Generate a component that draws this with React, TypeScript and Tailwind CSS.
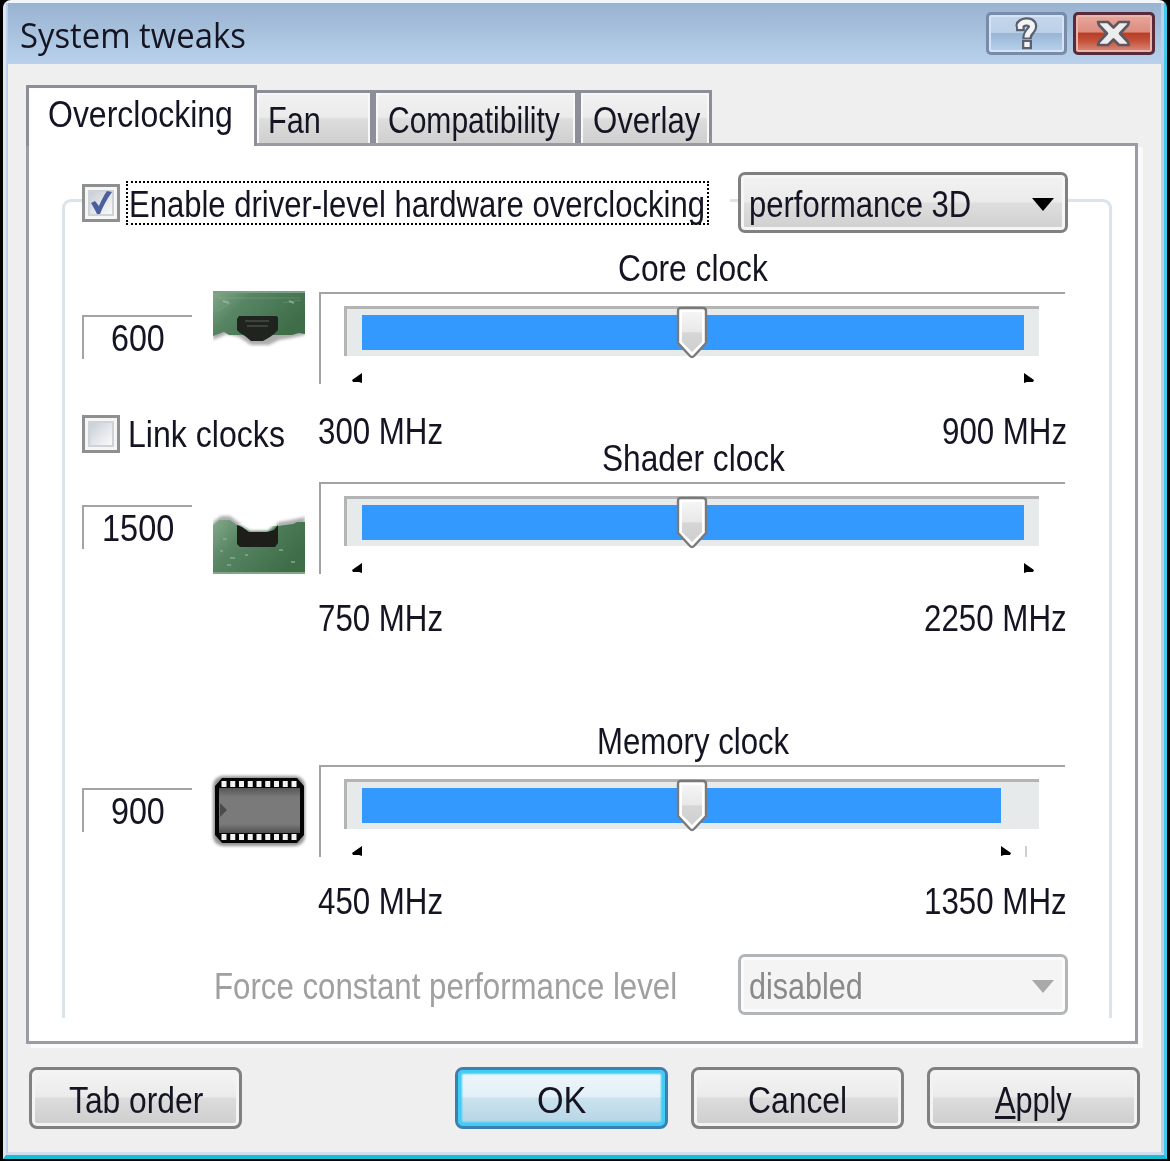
import { useLayoutEffect, useRef, useState } from 'react';
import type { ReactNode } from 'react';
import { clsx } from 'clsx';

interface FitTextProps {
  className: string;
  children: ReactNode;
}

// Squeezes one line of text into the width given by its class
function FitText({ className, children }: FitTextProps) {
  const outer = useRef<HTMLSpanElement>(null);
  const inner = useRef<HTMLSpanElement>(null);
  const [scale, setScale] = useState(1);

  useLayoutEffect(() => {
    if (outer.current && inner.current) {
      setScale(outer.current.clientWidth / inner.current.offsetWidth);
    }
  }, []);

  return (
    <span ref={outer} className={clsx('block h-[30px] shrink-0 leading-[33px]', className)}>
      <span
        ref={inner}
        className="inline-block origin-left whitespace-nowrap"
        style={{ transform: `scaleX(${scale})` }}
      >
        {children}
      </span>
    </span>
  );
}

function CheckBox({ checked }: { checked?: boolean }) {
  return (
    <span className="block size-[38px] shrink-0 border-[3px] border-[#8e8f8f] bg-[#f6f6f6] p-[3px]">
      <span className="block size-[26px] border-2 border-[#cfd3d8] bg-linear-to-br from-[#c9cfd8] to-[#fafafa]">
        {checked && (
          <svg viewBox="0 0 22 22" className="size-[22px] overflow-visible">
            <path d="M1 11 L5 9 L9 14 C11 9 14 3 17 -1 L22 0 C17 7 13 14 10 22 L7 22 C5 18 3 14 1 11Z" fill="#4a5f9c" />
          </svg>
        )}
      </span>
    </span>
  );
}

interface ComboProps {
  label: string;
  labelClass: string;
  disabled?: boolean;
}

function Combo({ label, labelClass, disabled }: ComboProps) {
  return (
    <div
      className={clsx(
        'flex h-[61px] w-[330px] shrink-0 items-start rounded-[7px] border-[3px] pt-[13px] pl-[8px]',
        disabled
          ? 'border-[#b2b6b8] bg-[#f4f4f4] text-[#8a8a8a] shadow-[inset_0_0_0_3px_#fbfbfb]'
          : 'border-[#808080] bg-[linear-gradient(#f2f2f2,#ebebeb_48%,#dedede_52%,#cfcfcf)] shadow-[inset_0_0_0_3px_#f6f6f6]'
      )}
    >
      <FitText className={labelClass}>{label}</FitText>
      <svg viewBox="0 0 22 13" className="mt-[10px] mr-[11px] ml-auto h-[13px] w-[22px]">
        <path d="M0 0H22L11 13Z" fill={disabled ? '#a9a9a9' : '#000'} />
      </svg>
    </div>
  );
}

function CoreIcon() {
  return (
    <svg viewBox="0 0 92 56" className="h-[56px] w-[92px]">
      <defs>
        <linearGradient id="pcb" x1="0" y1="0" x2="1" y2="0.5">
          <stop offset="0" stopColor="#84a98a" />
          <stop offset="0.35" stopColor="#588665" />
          <stop offset="1" stopColor="#3e6d48" />
        </linearGradient>
        <filter id="soft" x="-10%" y="-20%" width="120%" height="150%">
          <feGaussianBlur stdDeviation="1.8" />
        </filter>
      </defs>
      <path d="M0 40H92V44L78 47L66 49L56 54H38L26 46L14 43L0 49Z" fill="#777" opacity="0.6" filter="url(#soft)" />
      <path d="M0 1H92V43L86 42L79 44H16L11 41L0 45Z" fill="url(#pcb)" />
      <path d="M5 7H87M4 20L18 12M70 12L88 9" stroke="#9cbda2" strokeWidth="1" opacity="0.25" />
      <path d="M76 10L81 12M10 10L16 12" stroke="#b4d0b8" strokeWidth="2" opacity="0.5" />
      <path d="M26 25H64L65 27V39L61 43L57 46L50 50H38L32 45L27 42L24 39V28Z" fill="#20241f" />
      <path d="M32 30H56M34 35H55" stroke="#4b504b" strokeWidth="2" opacity="0.7" />
      <path d="M0 1H92" stroke="#7ba084" strokeWidth="2" />
    </svg>
  );
}

function ShaderIcon() {
  return (
    <svg viewBox="0 0 92 62" className="h-[62px] w-[92px]">
      <path d="M0 9L8 3H17L25 9L36 14H60L66 9L78 7L92 4V14H0Z" fill="#777" opacity="0.6" filter="url(#soft)" />
      <path d="M0 12L6 7H17L24 12L64 13L80 11L84 9H92V61H0Z" fill="url(#pcb)" />
      <path d="M27 12L37 18H55L62 12V9H27Z" fill="#fff" filter="url(#soft)" />
      <path d="M24 12L29 14L36 19H54L61 17L65 12V30L62 34H27L24 31Z" fill="#1d1e1a" />
      <path d="M10 26H14M7 38H10M17 45H22M66 37H70M78 49H82M14 52H18M32 42H35" stroke="#86b08b" strokeWidth="2" opacity="0.7" />
      <path d="M0 60H92" stroke="#80a886" strokeWidth="2" />
    </svg>
  );
}

function MemoryIcon() {
  const pins = [0, 1, 2, 3, 4, 5, 6, 7, 8];

  return (
    <svg viewBox="0 0 92 72" className="h-[72px] w-[92px] overflow-visible">
      <defs>
        <linearGradient id="chip" x1="0" y1="0" x2="0" y2="1">
          <stop offset="0" stopColor="#555" />
          <stop offset="0.2" stopColor="#7a7a7a" />
          <stop offset="0.8" stopColor="#7a7a7a" />
          <stop offset="1" stopColor="#505050" />
        </linearGradient>
      </defs>
      <rect x="0" y="1" width="92" height="70" rx="10" fill="#777" opacity="0.8" filter="url(#soft)" />
      <path d="M9 3H84L91 11V60L84 68H9L2 60V11Z" fill="#050505" />
      <rect x="6" y="13" width="81" height="45" fill="url(#chip)" />
      <path d="M7 28L14 35L7 42Z" fill="#4b4b4b" />
      {pins.map((pin) => (
        <g key={pin} fill="#f3f3f3">
          <rect x={8.5 + pin * 8.75} y="6" width="5" height="6" />
          <rect x={8.5 + pin * 8.75} y="59" width="5" height="6" />
        </g>
      ))}
    </svg>
  );
}

interface ClockProps {
  title: string;
  titleClass: string;
  value: string;
  valueClass: string;
  min: string;
  minClass: string;
  max: string;
  maxClass: string;
  icon: ReactNode;
  iconClass: string;
  className: string;
  rangeClass: string;
  limited?: boolean;
  children?: ReactNode;
}

function Clock(props: ClockProps) {
  return (
    <section className={clsx('flex shrink-0', props.className)}>
      <div className="w-[237px] shrink-0">
        <div className="flex h-[163px]">
          <div className="mt-[63px] flex h-[44px] w-[110px] justify-center border-t-[2px] border-l-[2px] border-[#a3a3a3] pt-[5px]">
            <FitText className={props.valueClass}>{props.value}</FitText>
          </div>
          <div className={clsx('ml-[21px]', props.iconClass)}>{props.icon}</div>
        </div>
        {props.children}
      </div>

      <div className="w-[748px] shrink-0">
        <div className="flex h-[40px] justify-center">
          <FitText className={props.titleClass}>{props.title}</FitText>
        </div>
        <div className="h-[92px] w-[746px] border-t-[2px] border-l-[2px] border-[#a3a3a3] pt-[12px] pl-[23px]">
          <div className="relative h-[50px] w-[695px] border-t-[3px] border-l-[3px] border-[#b4b4b4] bg-[#e7eaea] pt-[6px] pl-[15px]">
            <div className={clsx('h-[35px] bg-[#3399ff]', props.limited ? 'w-[639px]' : 'w-[662px]')} />
            <svg viewBox="0 0 32 54" className="absolute -top-[3px] left-[329px] h-[54px] w-[32px]">
              <defs>
                <linearGradient id="thumb" x1="0" y1="0" x2="0" y2="1">
                  <stop offset="0" stopColor="#f5f5f5" />
                  <stop offset="0.5" stopColor="#e8e8e8" />
                  <stop offset="0.52" stopColor="#d6d6d6" />
                  <stop offset="1" stopColor="#cfcfcf" />
                </linearGradient>
              </defs>
              <path
                d="M5 2H27Q30 2 30 5V37L18 50Q16 52 14 50L2 37V5Q2 2 5 2Z"
                fill="#fff"
                stroke="#7a7a7a"
                strokeWidth="2.4"
                strokeLinejoin="round"
              />
              <path d="M6 6H26V36L16 46L6 36Z" fill="url(#thumb)" />
            </svg>
          </div>
          <div className="mt-[17px] ml-[8px] flex h-[12px] items-start">
            <svg viewBox="0 0 10 10" className="size-[10px]">
              <path d="M10 0V10L7 9H1L0 7Z" />
            </svg>
            <svg
              viewBox="0 0 10 10"
              className={clsx('size-[10px]', props.limited ? 'ml-[639px]' : 'ml-[662px]')}
            >
              <path d="M0 0V10L3 9H9L10 7Z" />
            </svg>
            {props.limited && <span className="ml-[14px] h-[11px] w-[2px] bg-[#cfcfcf]" />}
          </div>
        </div>
        <div className={clsx('flex justify-between', props.rangeClass)}>
          <FitText className={props.minClass}>{props.min}</FitText>
          <FitText className={props.maxClass}>{props.max}</FitText>
        </div>
      </div>
    </section>
  );
}

interface TabProps {
  label: string;
  className: string;
  labelClass: string;
}

function Tab({ label, className, labelClass }: TabProps) {
  return (
    <div
      className={clsx(
        'mt-[5px] h-[53px] shrink-0 border-[3px] border-b-0 border-[#8c8f98] pt-[11px]',
        'bg-[linear-gradient(#f2f2f2,#ebebeb_48%,#dddddd_52%,#cfcfcf)] shadow-[inset_0_2px_0_#f8f8f8,inset_2px_0_0_#f8f8f8,inset_-2px_0_0_#f8f8f8]',
        className
      )}
    >
      <FitText className={labelClass}>{label}</FitText>
    </div>
  );
}

interface PushButtonProps {
  children: ReactNode;
  labelClass: string;
  primary?: boolean;
}

function PushButton({ children, labelClass, primary }: PushButtonProps) {
  return (
    <button
      className={clsx(
        'flex h-[62px] w-[213px] shrink-0 justify-center rounded-[8px] border-[3px] pt-[14px]',
        primary
          ? 'border-[#3c7fb1] bg-[linear-gradient(#eef6fb,#e4f0f7_47%,#cbe2ee_51%,#b3d4e6)] shadow-[inset_0_0_2px_4px_#3fcdf5]'
          : 'border-[#808080] bg-[linear-gradient(#f4f4f4,#ebebeb_47%,#dcdcdc_51%,#cdcdcd)] shadow-[inset_0_0_0_3px_#f3f3f3]'
      )}
    >
      <FitText className={labelClass}>{children}</FitText>
    </button>
  );
}

function TitleBar() {
  return (
    <header className="flex h-[61px] items-start bg-linear-to-b from-[#98b3d0] to-[#b9d1ec] pr-[6px] pl-[12px]">
      <FitText className="mt-[15px] w-[226px] font-['Open_Sans',sans-serif] text-[35px]">System tweaks</FitText>
      <div className="mt-[9px] ml-auto flex gap-[6px]">
        <button className="h-[43px] w-[81px] rounded-[5px] border-[3px] border-[#788ba8] bg-[linear-gradient(#c3d6eb,#bcd0e8_48%,#9ab6d6_50%,#b8d3ee)] shadow-[inset_0_0_0_2px_#d5e4f4]">
          <svg viewBox="0 0 75 37" className="h-[37px] w-[75px]">
            <g fill="none" stroke="#596171" strokeWidth="9.5">
              <path d="M27 11.5H31C31 6 43 5 43.5 11C44 16 38 16 38 24" />
              <path d="M33 29.5H43" />
            </g>
            <g fill="none" stroke="#f4f4f4" strokeWidth="5">
              <path d="M29 11.5H31C31 6 43 5 43.5 11C44 16 38 16 38 22.5" />
              <path d="M35.3 29.5H40.7" />
            </g>
          </svg>
        </button>
        <button className="h-[43px] w-[82px] rounded-[5px] border-[3px] border-[#592b3a] bg-[linear-gradient(#e8a79c,#dc8d80_46%,#b93d25_49%,#c4523b_70%,#dc8f7e)] shadow-[inset_0_0_0_2px_#eab5ab]">
          <svg viewBox="0 0 76 37" className="h-[37px] w-[76px]">
            <path
              d="M22 7H32L37.5 12.5L43 7H53L52 10L44 18.5L52 27L53 30H43L37.5 24.5L32 30H22L23 27L31 18.5L23 10Z"
              fill="#ededed"
              stroke="#5c5763"
              strokeWidth="2.6"
              strokeLinejoin="round"
            />
          </svg>
        </button>
      </div>
    </header>
  );
}

export default function App() {
  return (
    <div className="h-[1161px] w-[1170px] overflow-hidden bg-black pr-[3px] pb-[2px] pl-[3px] font-['Liberation_Sans',Arial,sans-serif] text-[37px] text-[#141422]">
      <div className="h-[1159px] rounded-t-[8px] border-t-[3px] border-r-[3px] border-b-[4px] border-l-[3px] border-t-[#f1f6fa] border-r-[#3fc9ea] border-b-[#14bfd6] border-l-[#e0e5e8]">
        <div className="h-[1152px] border-r-[3px] border-b-[3px] border-l-[2px] border-r-[#b9cfeb] border-b-[#d2dcef] border-l-[#b9d1ec] bg-[#efefef]">
          <TitleBar />

          <main className="pt-[21px] pl-[18px]">
            <nav className="flex h-[58px] items-start">
              <div className="relative z-10 h-[61px] w-[231px] shrink-0 border-[3px] border-b-0 border-[#8c8f98] bg-white pt-[10px] pl-[19px]">
                <FitText className="w-[185px]">Overclocking</FitText>
              </div>
              <Tab label="Fan" className="-ml-[3px] w-[119px] pl-[11px]" labelClass="w-[53px]" />
              <Tab label="Compatibility" className="w-[205px] pl-[12px]" labelClass="w-[172px]" />
              <Tab label="Overlay" className="w-[134px] pl-[12px]" labelClass="w-[107px]" />
            </nav>

            <div className="h-[901px] w-[1112px] border-[3px] border-[#9a9ca5] bg-white pt-[53px] pl-[33px] shadow-[5px_4px_0_#fafafa]">
              <div className="h-[819px] w-[1050px] rounded-t-[9px] border-[3px] border-b-0 border-[#dae4ea]">
                <div className="-mt-[30px] flex h-[61px] items-start pl-[17px]">
                  <div className="mt-[9px] flex w-[648px] items-start bg-white">
                    <div className="mt-[3px]">
                      <CheckBox checked />
                    </div>
                    <div className="ml-[6px] h-[44px] w-[583px] border-[2px] border-dotted border-black pt-[5px] pl-[1px]">
                      <FitText className="w-[576px]">Enable driver-level hardware overclocking</FitText>
                    </div>
                  </div>
                  <div className="ml-[8px]">
                    <Combo label="performance 3D" labelClass="w-[222px]" />
                  </div>
                </div>

                <div className="pt-[19px] pl-[17px]">
                  <Clock
                    title="Core clock"
                    titleClass="w-[150px]"
                    value="600"
                    valueClass="w-[54px]"
                    min="300 MHz"
                    minClass="w-[125px] -ml-[1px]"
                    max="900 MHz"
                    maxClass="w-[125px]"
                    icon={<CoreIcon />}
                    iconClass="mt-[39px]"
                    className="h-[190px]"
                    rangeClass="mt-[31px]"
                  >
                    <div className="flex items-start">
                      <CheckBox />
                      <FitText className="mt-[3px] ml-[8px] w-[157px]">Link clocks</FitText>
                    </div>
                  </Clock>
                  <Clock
                    title="Shader clock"
                    titleClass="w-[183px]"
                    value="1500"
                    valueClass="w-[72px]"
                    min="750 MHz"
                    minClass="w-[125px] -ml-[1px]"
                    max="2250 MHz"
                    maxClass="w-[143px]"
                    icon={<ShaderIcon />}
                    iconClass="mt-[71px]"
                    className="h-[283px]"
                    rangeClass="mt-[28px]"
                  />
                  <Clock
                    title="Memory clock"
                    titleClass="w-[192px]"
                    value="900"
                    valueClass="w-[54px]"
                    min="450 MHz"
                    minClass="w-[125px] -ml-[1px]"
                    max="1350 MHz"
                    maxClass="w-[143px]"
                    icon={<MemoryIcon />}
                    iconClass="mt-[50px]"
                    className="h-[230px]"
                    rangeClass="mt-[28px]"
                    limited
                  />
                  <div className="flex items-start pl-[132px]">
                    <FitText className="mt-[15px] w-[463px] text-[#a0a0a0]">Force constant performance level</FitText>
                    <div className="-mt-[1px] ml-[61px]">
                      <Combo label="disabled" labelClass="w-[114px]" disabled />
                    </div>
                  </div>
                </div>
              </div>
            </div>

            <footer className="mt-[23px] flex w-[1114px] items-start gap-[23px] pl-[3px]">
              <PushButton labelClass="w-[134px]">Tab order</PushButton>
              <div className="ml-auto">
                <PushButton labelClass="w-[49px]" primary>
                  OK
                </PushButton>
              </div>
              <PushButton labelClass="w-[99px]">Cancel</PushButton>
              <PushButton labelClass="w-[77px]">
                <span className="underline decoration-[3px] underline-offset-[3px]">A</span>pply
              </PushButton>
            </footer>
          </main>
        </div>
      </div>
    </div>
  );
}
